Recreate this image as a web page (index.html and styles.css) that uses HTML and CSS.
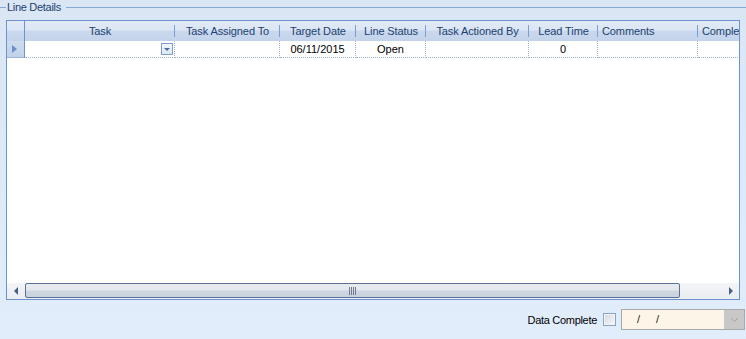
FILE: index.html
```html
<!DOCTYPE html>
<html>
<head>
<meta charset="utf-8">
<link rel="stylesheet" href="styles.css">
</head>
<body>
<div class="group">
  <div class="group-title"><span class="group-text">Line Details</span></div>
  <div class="grid">
    <div class="hdr">
      <div class="hc rowsel"></div>
      <div class="hc w-task">Task</div>
      <div class="hc w-assigned">Task Assigned To</div>
      <div class="hc w-target">Target Date</div>
      <div class="hc w-status">Line Status</div>
      <div class="hc w-actioned">Task Actioned By</div>
      <div class="hc w-lead">Lead Time</div>
      <div class="hc w-comments left">Comments</div>
      <div class="hc w-complete left">Complete</div>
    </div>
    <div class="row">
      <div class="dc rowsel"><span class="indicator"></span></div>
      <div class="dc w-task combo"><span class="combo-btn"><span class="caret"></span></span></div>
      <div class="dc w-assigned"></div>
      <div class="dc w-target">06/11/2015</div>
      <div class="dc w-status">Open</div>
      <div class="dc w-actioned"></div>
      <div class="dc w-lead">0</div>
      <div class="dc w-comments"></div>
      <div class="dc w-complete"></div>
    </div>
    <div class="empty"></div>
    <div class="hscroll">
      <div class="sb-btn"><span class="arrow-left"></span></div>
      <div class="thumb"><span class="grip"><i></i><i></i><i></i><i></i></span></div>
      <div class="track"></div>
      <div class="sb-btn"><span class="arrow-right"></span></div>
    </div>
  </div>
</div>
<div class="footer">
  <span class="label">Data Complete</span>
  <span class="check"></span>
  <div class="datebox">
    <span class="date-text"><span>/</span><span class="sep2">/</span></span>
    <span class="date-btn"><svg width="9" height="6" viewBox="0 0 9 6"><path d="M1 1 L4.5 4.5 L8 1" fill="none" stroke="#a3a3a3" stroke-width="1"/></svg></span>
  </div>
</div>
</body>
</html>
```
FILE: styles.css
```css
* { box-sizing: border-box; }
html, body { margin: 0; padding: 0; }
body {
  width: 746px;
  height: 339px;
  overflow: hidden;
  background: linear-gradient(#dbe6f4, #dfeaf8 60%, #e2edfc);
  font-family: "Liberation Sans", Arial, sans-serif;
  font-size: 11px;
  letter-spacing: -0.3px;
  color: #000;
}
.group { height: 300px; }
.group-title {
  display: flex;
  align-items: center;
  height: 14px;
}
.group-title::before {
  content: "";
  width: 6px;
  height: 1px;
  background: #84a6d8;
  margin-right: 1px;
}
.group-title::after {
  content: "";
  flex: 1;
  height: 1px;
  background: #84a6d8;
  margin-left: 5px;
}
.group-text { color: #213f70; line-height: 14px; }

.grid {
  margin: 6px 0 0 6px;
  width: 734px;
  height: 280px;
  border: 1px solid #6d93cc;
  background: #fff;
  display: flex;
  flex-direction: column;
  overflow: hidden;
}
.hdr, .row { display: flex; flex-shrink: 0; }
.hdr {
  height: 20px;
  background: linear-gradient(#e0e9f5 0, #dce6f4 45%, #cad9ed 50%, #c3d3ea 100%);
}
.hc {
  flex-shrink: 0;
  height: 20px;
  line-height: 20px;
  text-align: center;
  color: #213f70;
  letter-spacing: -0.1px;
  white-space: nowrap;
  overflow: hidden;
  background: linear-gradient(#7c9fd3, #7c9fd3) no-repeat right 4px / 1px 12px;
}
.hc.left { text-align: left; padding-left: 4px; }
.rowsel { width: 18px; flex-shrink: 0; }
.hc.rowsel { background: none; border-right: 1px solid #6d93cc; }
.w-task { width: 150px; }
.w-assigned { width: 105px; }
.w-target { width: 76px; }
.w-status { width: 70px; }
.w-actioned { width: 103px; }
.w-lead { width: 69px; }
.w-comments { width: 100px; }
.w-complete { width: 100px; }

.row { height: 17px; }
.dc {
  flex-shrink: 0;
  height: 17px;
  line-height: 17px;
  text-align: center;
  letter-spacing: 0;
  border-right: 1px dotted #9fb3d3;
  border-bottom: 1px dotted #9fb3d3;
}
.dc.rowsel {
  background: linear-gradient(#cfdcef, #c0d1ea);
  border-right: 1px solid #6d93cc;
  border-bottom: 1px solid #9ab4dc;
  display: flex;
  align-items: center;
  padding-left: 5px;
}
.indicator {
  width: 0; height: 0;
  border-left: 5px solid #6c8fcc;
  border-top: 4.5px solid transparent;
  border-bottom: 4.5px solid transparent;
}
.combo {
  display: flex;
  justify-content: flex-end;
  align-items: center;
  padding-right: 1px;
}
.combo-btn {
  width: 12px;
  height: 12px;
  border: 1px solid #7f9fd0;
  background: linear-gradient(#f2f6fb, #dde7f4);
  display: flex;
  align-items: center;
  justify-content: center;
}
.caret {
  width: 0; height: 0;
  border-top: 3px solid #4d6a9c;
  border-left: 3px solid transparent;
  border-right: 3px solid transparent;
}
.empty { flex: 1; }

.hscroll {
  height: 16px;
  flex-shrink: 0;
  display: flex;
  background: linear-gradient(#f3f4f6, #eaedf1);
}
.sb-btn {
  width: 18px;
  flex-shrink: 0;
  display: flex;
  align-items: center;
  justify-content: center;
}
.sb-btn:last-child { width: 17px; }
.arrow-left {
  width: 0; height: 0;
  border-right: 4px solid #4a5f85;
  border-top: 4px solid transparent;
  border-bottom: 4px solid transparent;
}
.arrow-right {
  width: 0; height: 0;
  border-left: 4px solid #4a5f85;
  border-top: 4px solid transparent;
  border-bottom: 4px solid transparent;
}
.thumb {
  width: 655px;
  height: 15px;
  flex-shrink: 0;
  border: 1px solid #5d7196;
  border-radius: 2px;
  background: linear-gradient(#e6e9ed 0, #e4e8ec 48%, #cdd6e1 52%, #c9d3df 100%);
  display: flex;
  align-items: center;
  justify-content: center;
}
.grip { display: flex; gap: 1px; height: 8px; }
.grip i { width: 1px; height: 8px; background: #6f7c90; }
.track { flex: 1; }

.footer {
  height: 39px;
  display: flex;
  align-items: center;
  justify-content: flex-end;
  padding-right: 1px;
}
.label { margin-right: 6px; }
.check {
  width: 13px;
  height: 13px;
  border: 1px solid #8aa3c4;
  background: linear-gradient(135deg, #d6d9de, #f6f7f8);
  box-shadow: inset 0 0 0 1px #f3f4f6;
  margin-right: 5px;
}
.datebox {
  width: 124px;
  height: 21px;
  border: 1px solid #a7a9ad;
  background: #fdf5e7;
  display: flex;
  align-items: stretch;
}
.date-text {
  flex: 1;
  padding-left: 15px;
  line-height: 19px;
  color: #222;
  letter-spacing: 0;
}
.sep2 { margin-left: 16px; }
.date-btn {
  width: 20px;
  background: #c8c8c8;
  display: flex;
  align-items: center;
  justify-content: center;
}
```
